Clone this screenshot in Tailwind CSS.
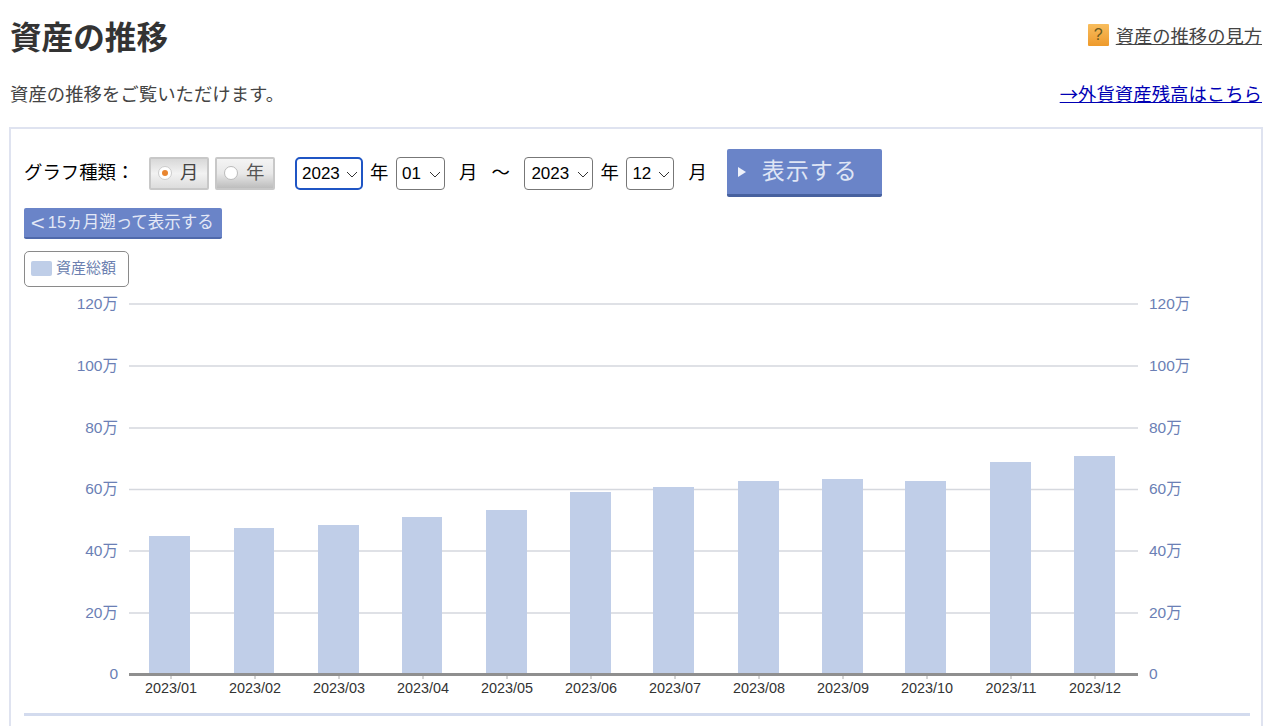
<!DOCTYPE html>
<html lang="ja">
<head>
    <meta charset="UTF-8">
    <title>資産の推移</title>
    <script src="https://cdn.jsdelivr.net/npm/@tailwindcss/browser@4"></script>
</head>
<body class="bg-white h-[726px] overflow-hidden font-['Liberation_Sans','Noto_Sans_CJK_JP',sans-serif] text-[#333]">
<div class="pl-[10px] pr-[18px]">
    <!-- header -->
    <div class="flex justify-between items-start h-[74px] pt-[18px]">
        <h1 class="text-[31.6px] leading-[40px] font-bold">資産の推移</h1>
        <a href="#" class="flex items-center gap-[7px] mt-[6px] text-[18.3px] leading-[24px] text-[#444]">
            <span class="w-[21px] h-[22px] mb-[3px] flex items-center justify-center text-[16px] leading-none rounded-[1px] bg-gradient-to-b from-[#f8bd5c] to-[#ee9a2a] text-[#6b5a20]">?</span>
            <span class="underline">資産の推移の見方</span>
        </a>
    </div>
    <div class="flex justify-between items-center h-[40px]">
        <p class="text-[18.4px] text-[#444] pt-[2px]">資産の推移をご覧いただけます。</p>
        <a href="#" class="text-[#0000b4] underline text-[18.4px] font-['Noto_Sans_CJK_JP',sans-serif]">→外貨資産残高はこちら</a>
    </div>

    <!-- panel -->
    <div class="mt-[13px] -mx-[1px] h-[599px] border-2 border-b-0 border-[#dfe3f0] pl-[13px] pr-[11px] pt-[20px]">
        <div class="flex items-center h-[48px] text-[18.4px] text-black">
            <span class="w-[125px]">グラフ種類：</span>
            <span class="flex items-center w-[60px] h-[33px] border-2 border-[#c8c8c8] rounded-[2px] bg-gradient-to-b from-[#d8d8d8] via-[#f2f2f2] to-[#dcdcdc] pl-[7px] gap-[8px] text-[#444]">
                <span class="w-[14px] h-[14px] rounded-full bg-white border border-[#ccc] flex items-center justify-center"><span class="w-[6px] h-[6px] rounded-full bg-[#e8852f]"></span></span>月
            </span>
            <span class="flex items-center w-[60px] h-[33px] ml-[6px] border-2 border-[#c8c8c8] rounded-[2px] bg-gradient-to-b from-[#f4f4f4] via-[#e8e8e8] to-[#bdbdbd] pl-[7px] gap-[8px] text-[#555]">
                <span class="w-[14px] h-[14px] rounded-full bg-white border border-[#bbb]"></span>年
            </span>
            <span class="flex items-center justify-between w-[68px] h-[33px] ml-[20px] pl-[5px] pr-[3px] pt-[2px] border-2 border-[#1f55c4] rounded-[5px] text-[17px]">2023<svg width="12" height="7" viewBox="0 0 12 7"><path d="M1 1l5 5 5-5" fill="none" stroke="#333"/></svg></span>
            <span class="ml-[7px] w-[26px]">年</span>
            <span class="flex items-center justify-between w-[49px] h-[33px] pl-[5px] pr-[3px] pt-[2px] border border-[#777] rounded-[4px] text-[17px]">01<svg width="12" height="7" viewBox="0 0 12 7"><path d="M1 1l5 5 5-5" fill="none" stroke="#333"/></svg></span>
            <span class="ml-[14px]">月</span>
            <span class="ml-[14px] w-[33px]">〜</span>
            <span class="flex items-center justify-between w-[69px] h-[33px] pl-[6px] pr-[3px] pt-[2px] border border-[#777] rounded-[4px] text-[17px]">2023<svg width="12" height="7" viewBox="0 0 12 7"><path d="M1 1l5 5 5-5" fill="none" stroke="#333"/></svg></span>
            <span class="ml-[7px] w-[26px]">年</span>
            <span class="flex items-center justify-between w-[48px] h-[33px] pl-[5px] pr-[3px] pt-[2px] border border-[#777] rounded-[4px] text-[17px]">12<svg width="12" height="7" viewBox="0 0 12 7"><path d="M1 1l5 5 5-5" fill="none" stroke="#333"/></svg></span>
            <span class="ml-[14px]">月</span>
            <span class="flex items-center w-[155px] h-[48px] ml-[20px] pl-[10px] gap-[15px] rounded-[2px] bg-[#6a84c8] border-b-[3px] border-[#47619f] text-[#dfe5f5] text-[23px] tracking-[1px]">
                <svg width="10" height="10" viewBox="0 0 10 10"><path d="M1 0l8 5-8 5z" fill="#eef1fa"/></svg>表示する
            </span>
        </div>
        <div class="mt-[11px] flex items-center justify-center w-[198px] h-[31px] rounded-[2px] bg-[#6a84c8] border-b-2 border-[#4f69ab] text-[#e3e8f6] text-[16.5px]"><span class="text-[20px] leading-none font-light scale-x-[1.2] mr-[4px]">&lt;</span>15ヵ月遡って表示する</div>
        <div class="mt-[12px] flex items-center gap-[4px] w-[105px] h-[36px] pl-[6px] pb-[2px] border border-[#8a8a8a] rounded-[5px] text-[15px] text-[#6b7fb0]">
            <span class="w-[21px] h-[15px] rounded-[2px] bg-[#bfcee8]"></span>資産総額
        </div>

        <!-- chart -->
        <svg class="block -ml-[14px]" width="1250" height="430" viewBox="0 0 1250 430" font-size="15.5" fill="#6b7fb5">
            <g stroke="#d5d8de" stroke-width="1.5">
                <path d="M119 17H1128M119 79H1128M119 141H1128M119 202.5H1128M119 264H1128M119 326H1128"/>
            </g>
            <g fill="#c0cee8">
                <rect x="139" y="249" width="41" height="138"/>
                <rect x="224" y="241" width="40" height="146"/>
                <rect x="308" y="238" width="41" height="149"/>
                <rect x="392" y="230" width="40" height="157"/>
                <rect x="476" y="223" width="41" height="164"/>
                <rect x="560" y="205" width="41" height="182"/>
                <rect x="643" y="200" width="41" height="187"/>
                <rect x="728" y="194" width="41" height="193"/>
                <rect x="812" y="192" width="41" height="195"/>
                <rect x="895" y="194" width="41" height="193"/>
                <rect x="980" y="175" width="41" height="212"/>
                <rect x="1064" y="169" width="41" height="218"/>
            </g>
            <path d="M119 387.5H1128" stroke="#8f8f8f" stroke-width="3"/>
            <path d="M161 389v3M245 389v3M329 389v3M413 389v3M497 389v3M581 389v3M665 389v3M749 389v3M833 389v3M917 389v3M1001 389v3M1085 389v3" stroke="#aaa"/>
            <g text-anchor="end">
                <text x="108" y="21.5">120万</text><text x="108" y="83.5">100万</text><text x="108" y="145.5">80万</text><text x="108" y="206.5">60万</text><text x="108" y="268.5">40万</text><text x="108" y="330.5">20万</text><text x="108" y="391.5">0</text>
            </g>
            <g>
                <text x="1139" y="21.5">120万</text><text x="1139" y="83.5">100万</text><text x="1139" y="145.5">80万</text><text x="1139" y="206.5">60万</text><text x="1139" y="268.5">40万</text><text x="1139" y="330.5">20万</text><text x="1139" y="391.5">0</text>
            </g>
            <g text-anchor="middle" font-size="14.4" fill="#333">
                <text x="161" y="406">2023/01</text><text x="245" y="406">2023/02</text><text x="329" y="406">2023/03</text><text x="413" y="406">2023/04</text><text x="497" y="406">2023/05</text><text x="581" y="406">2023/06</text><text x="665" y="406">2023/07</text><text x="749" y="406">2023/08</text><text x="833" y="406">2023/09</text><text x="917" y="406">2023/10</text><text x="1001" y="406">2023/11</text><text x="1085" y="406">2023/12</text>
            </g>
        </svg>
        <div class="-mt-[4px] h-[3px] bg-[#d3dbee]"></div>
    </div>
</div>
</body>
</html>
